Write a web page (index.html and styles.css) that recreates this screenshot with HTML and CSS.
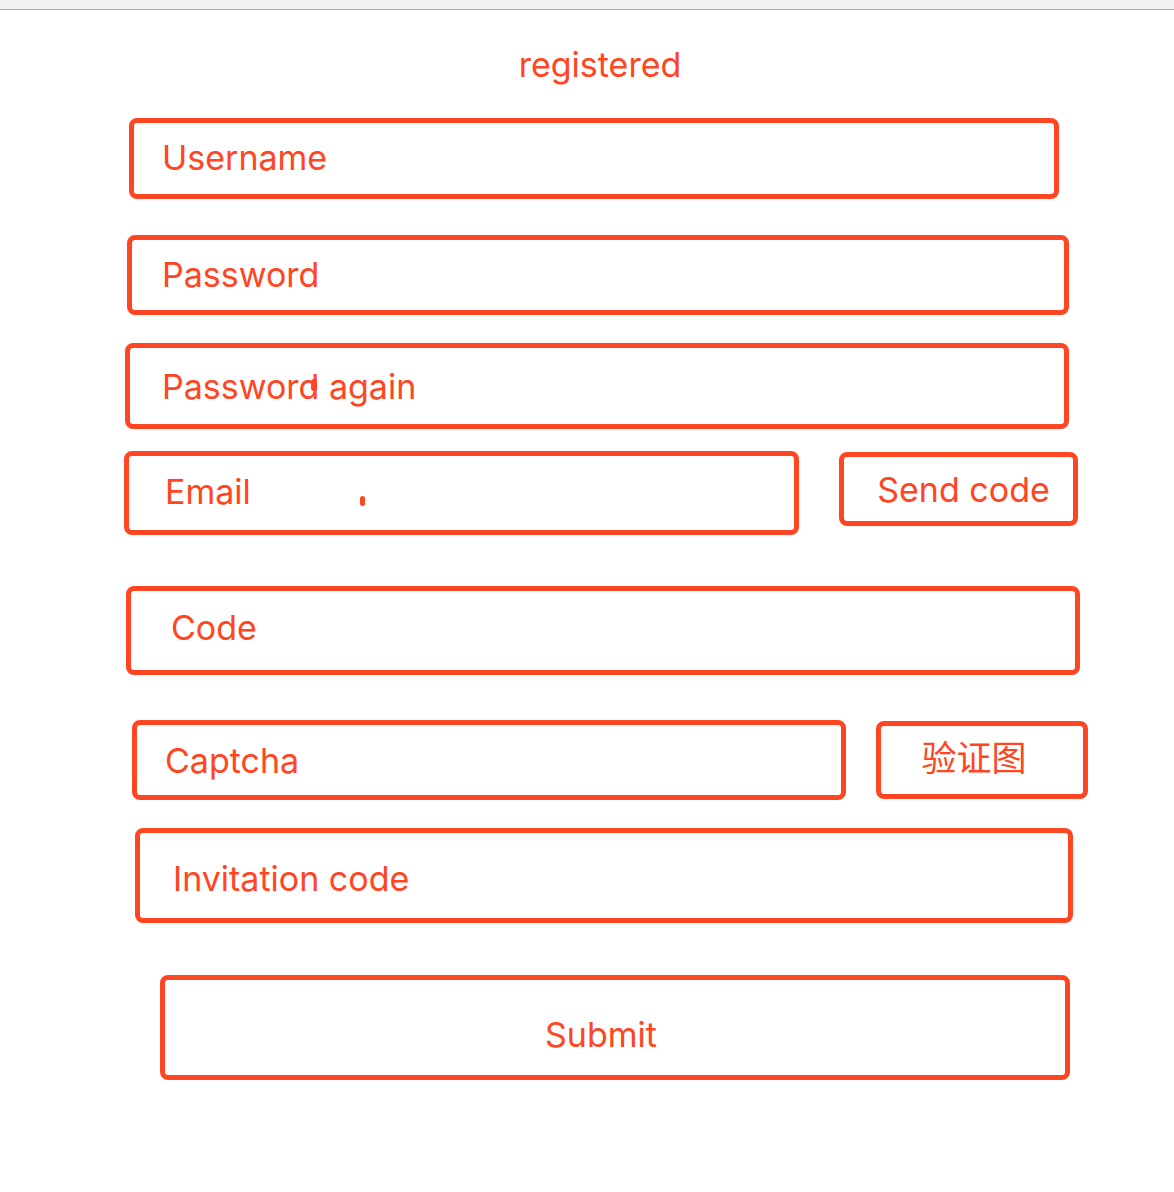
FILE: index.html
```html
<!DOCTYPE html>
<html lang="en">
<head>
<meta charset="utf-8">
<title>registered</title>
<link rel="stylesheet" href="styles.css">
</head>
<body>
<div class="topbar"></div>
<main class="form">
  <h1 class="title">registered</h1>
  <div class="field f-user"><span class="label">Username</span></div>
  <div class="field f-pass"><span class="label">Password</span></div>
  <div class="field f-again"><span class="label">Password again</span><span class="blot blot-again"></span></div>
  <div class="row r-email">
    <div class="field f-email"><span class="label">Email</span><span class="blot blot-email"></span></div>
    <div class="btn b-send"><span class="label">Send code</span></div>
  </div>
  <div class="field f-code"><span class="label">Code</span></div>
  <div class="row r-captcha">
    <div class="field f-captcha"><span class="label">Captcha</span></div>
    <div class="btn b-img"><span class="label cjk">验证图</span></div>
  </div>
  <div class="field f-invite"><span class="label">Invitation code</span></div>
  <div class="btn b-submit"><span class="label">Submit</span></div>
</main>
</body>
</html>
```

FILE: styles.css
```css
* { box-sizing: border-box; }
html, body { margin: 0; padding: 0; background: #ffffff; }
body {
  font-family: "Inter", "Noto Sans", "Liberation Sans", sans-serif;
  color: #ff4521;
  width: 1174px;
  height: 1192px;
  overflow: hidden;
}
.topbar {
  height: 10px;
  background: #f2f2f2;
  border-bottom: 1px solid #b0b0b0;
}
.form {
  display: flex;
  flex-direction: column;
  align-items: flex-start;
}
.title {
  margin: 35px 0 0 0;
  align-self: stretch;
  text-align: center;
  font-weight: 400;
  font-size: 34px;
  line-height: 40px;
  height: 40px;
  padding-left: 26px;
}
.field, .btn {
  position: relative;
  display: flex;
  align-items: center;
  border: 5px solid #ff4521;
  border-radius: 8px;
  font-size: 34px;
  line-height: 40px;
  flex-shrink: 0;
}
.label { white-space: nowrap; }
.btn { justify-content: center; }
.row { display: flex; align-items: flex-start; }

.f-user { margin: 33px 0 0 129px; width: 930px; height: 81px; padding: 0 0 2px 28px; }
.f-pass { margin: 36px 0 0 127px; width: 942px; height: 80px; padding: 0 0 0 30px; }
.f-again { margin: 28px 0 0 125px; width: 944px; height: 86px; padding: 2px 0 0 32px; }

.r-email { margin: 22px 0 0 124px; }
.f-email { width: 675px; height: 84px; padding: 0 0 2px 36px; }
.b-send { margin: 1px 0 0 40px; width: 239px; height: 74px; padding: 2px 0 0 10px; }

.f-code { margin: 51px 0 0 126px; width: 954px; height: 89px; padding: 0 0 6px 40px; }

.r-captcha { margin: 45px 0 0 132px; }
.f-captcha { width: 714px; height: 80px; padding: 2px 0 0 28px; }
.b-img { margin: 1px 0 0 30px; width: 212px; height: 78px; padding: 0 16px 8px 0; }
.cjk { font-family: "Noto Sans CJK SC", sans-serif; font-size: 35px; }

.f-invite { margin: 28px 0 0 135px; width: 938px; height: 95px; padding: 6px 0 0 33px; }
.b-submit { margin: 52px 0 0 160px; width: 910px; height: 105px; padding: 14px 28px 0 0; }

.blot {
  position: absolute;
  background: #ff4521;
  border-radius: 3px;
}
.blot-again { left: 181px; top: 31px; width: 6px; height: 12px; }
.blot-email { left: 231px; top: 40px; width: 5px; height: 10px; }
```
